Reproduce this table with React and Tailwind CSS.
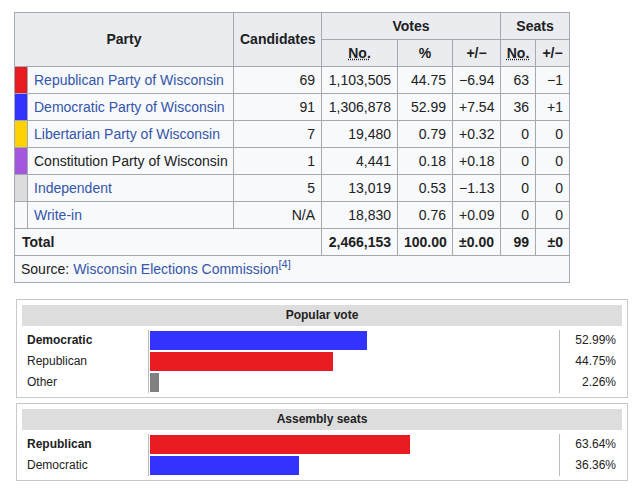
const parties = [
  { color: "bg-[#e81b23]", name: "Republican Party of Wisconsin", link: true, cand: "69", votes: "1,103,505", pct: "44.75", diff: "−6.94", seats: "63", sdiff: "−1" },
  { color: "bg-[#3333ff]", name: "Democratic Party of Wisconsin", link: true, cand: "91", votes: "1,306,878", pct: "52.99", diff: "+7.54", seats: "36", sdiff: "+1" },
  { color: "bg-[#fed105]", name: "Libertarian Party of Wisconsin", link: true, cand: "7", votes: "19,480", pct: "0.79", diff: "+0.32", seats: "0", sdiff: "0" },
  { color: "bg-[#a356de]", name: "Constitution Party of Wisconsin", link: false, cand: "1", votes: "4,441", pct: "0.18", diff: "+0.18", seats: "0", sdiff: "0" },
  { color: "bg-[#dcdcdc]", name: "Independent", link: true, cand: "5", votes: "13,019", pct: "0.53", diff: "−1.13", seats: "0", sdiff: "0" },
  { color: "bg-[#f8f9fa]", name: "Write-in", link: true, cand: "N/A", votes: "18,830", pct: "0.76", diff: "+0.09", seats: "0", sdiff: "0" },
];

const popular = [
  { label: "Democratic", bold: true, color: "bg-[#3333ff]", value: 52.99 },
  { label: "Republican", bold: false, color: "bg-[#e81b23]", value: 44.75 },
  { label: "Other", bold: false, color: "bg-[#808080]", value: 2.26 },
];

const seats = [
  { label: "Republican", bold: true, color: "bg-[#e81b23]", value: 63.64 },
  { label: "Democratic", bold: false, color: "bg-[#3333ff]", value: 36.36 },
];

const td = "border border-[#a2a9b1] px-[6px] text-right";
const th = "border border-[#a2a9b1] px-[6px] bg-[#eaecf0] font-bold text-center";

function BarBox({ title, rows }) {
  return (
    <div className="border border-[#c8c8c8] px-[5px] pt-[5px] pb-[4px] bg-white">
      <div className="h-[21px] bg-[#dddddd] text-center font-bold leading-[21px]">{title}</div>
      <div className="mt-[4px] flex">
        <div className="w-[126px] pl-[5px]">
          {rows.map((r) => (
            <div key={r.label} className={`h-[21px] leading-[21px] ${r.bold ? "font-bold" : ""}`}>
              {r.label}
            </div>
          ))}
        </div>
        <div className="w-[412px] border-l border-r border-[#bbbbbb] pl-[1px]">
          {rows.map((r) => (
            <div key={r.label} className="h-[21px] pt-[1px]">
              <div className={`h-[19px] ${r.color}`} style={{ width: `${(r.value / 100) * 409}px` }} />
            </div>
          ))}
        </div>
        <div className="flex-1 pr-[6px] text-right">
          {rows.map((r) => (
            <div key={r.label} className="h-[21px] leading-[21px]">
              {r.value.toFixed(2)}%
            </div>
          ))}
        </div>
      </div>
    </div>
  );
}

export default function App() {
  return (
    <div className="w-[643px] h-[493px] bg-white text-[#202122] font-['Liberation_Sans',Arial,sans-serif]">
      <div className="pl-[14px] pt-[12px]">
        <table className="table-fixed border-collapse w-[555px] text-[14px]">
          <colgroup>
            <col className="w-[13px]" />
            <col className="w-[206px]" />
            <col className="w-[88px]" />
            <col className="w-[76px]" />
            <col className="w-[55px]" />
            <col className="w-[48px]" />
            <col className="w-[35px]" />
            <col className="w-[34px]" />
          </colgroup>
          <thead>
            <tr className="h-[27px]">
              <th colSpan={2} rowSpan={2} className={th}>Party</th>
              <th rowSpan={2} className={th}>Candidates</th>
              <th colSpan={3} className={th}>Votes</th>
              <th colSpan={2} className={th}>Seats</th>
            </tr>
            <tr className="h-[27px]">
              <th className={th}><span className="underline decoration-dotted">No.</span></th>
              <th className={th}>%</th>
              <th className={th}>+/−</th>
              <th className={`${th} !px-0`}><span className="underline decoration-dotted">No.</span></th>
              <th className={`${th} !px-0`}>+/−</th>
            </tr>
          </thead>
          <tbody>
            {parties.map((p) => (
              <tr key={p.name} className="h-[27px] bg-[#f8f9fa]">
                <td className={`border border-[#a2a9b1] ${p.color}`} />
                <td className="border border-[#a2a9b1] px-[6px] text-left whitespace-nowrap">
                  <span className={p.link ? "text-[#3355aa]" : ""}>{p.name}</span>
                </td>
                <td className={td}>{p.cand}</td>
                <td className={td}>{p.votes}</td>
                <td className={td}>{p.pct}</td>
                <td className={td}>{p.diff}</td>
                <td className={td}>{p.seats}</td>
                <td className={td}>{p.sdiff}</td>
              </tr>
            ))}
            <tr className="h-[27px] bg-[#f8f9fa] font-bold">
              <td colSpan={3} className="border border-[#a2a9b1] px-[7px] text-left">Total</td>
              <td className={td}>2,466,153</td>
              <td className={td}>100.00</td>
              <td className={td}>±0.00</td>
              <td className={td}>99</td>
              <td className={td}>±0</td>
            </tr>
            <tr className="h-[27px] bg-[#f8f9fa]">
              <td colSpan={8} className="border border-[#a2a9b1] px-[6px] text-left">
                Source: <span className="text-[#3355aa]">Wisconsin Elections Commission<sup className="text-[11px]">[4]</sup></span>
              </td>
            </tr>
          </tbody>
        </table>
      </div>
      <div className="w-[612px] ml-[16px] mt-[16px] text-[12px] text-[#222222] flex flex-col gap-[5px]">
        <BarBox title="Popular vote" rows={popular} />
        <BarBox title="Assembly seats" rows={seats} />
      </div>
    </div>
  );
}
